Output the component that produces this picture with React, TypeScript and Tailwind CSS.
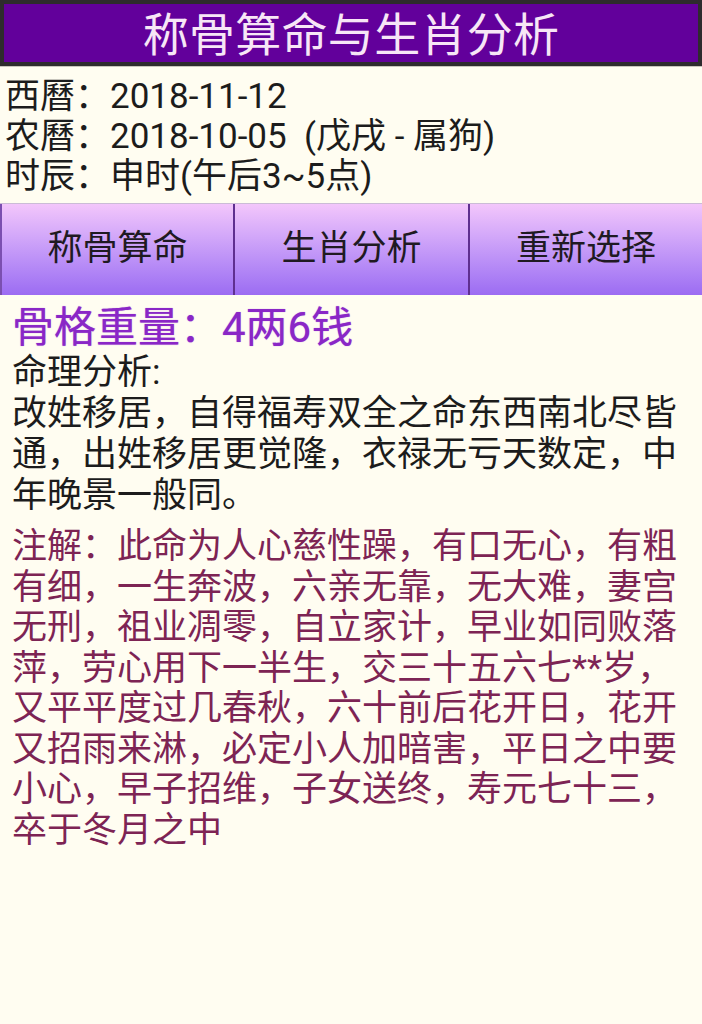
import React from "react";

const FONT = "font-['Roboto','Noto_Sans_CJK_SC',sans-serif]";

export default function App() {
  return (
    <div className={`w-[702px] min-h-[1024px] bg-[#fffdf1] ${FONT} text-[#1c1c1c]`}>
      {/* Title bar */}
      <div className="bg-[#2e2b2e] p-[4px] pb-[4px]">
        <div className="h-[58px] bg-[#62009b] flex items-center justify-center pt-[3px]">
          <span className="text-[46px] leading-none text-[#f7e6f6] tracking-[0.3px]">称骨算命与生肖分析</span>
        </div>
      </div>
      <div className="h-[1px] bg-[#c9c6bc]" />

      {/* Info lines */}
      <div className="pt-[10px] pb-[6px] pl-[5px] text-[35px] leading-[40px]">
        <div>西曆：2018-11-12</div>
        <div>农曆：2018-10-05&nbsp; (戊戌 - 属狗)</div>
        <div>时辰：申时(午后3~5点)</div>
      </div>

      {/* Buttons */}
      <div className="flex h-[92px] border-t border-[#cbbcd6] bg-gradient-to-b from-[#f3c6fb] to-[#9c6cf2]">
        <div className="w-[233px] flex items-center justify-center border-l-2 border-[#7b4fb0] text-[35px] text-[#1f1a22]">称骨算命</div>
        <div className="w-[235px] flex items-center justify-center border-l-2 border-[#5f2f90] text-[35px] text-[#1f1a22]">生肖分析</div>
        <div className="flex-1 flex items-center justify-center border-l-2 border-[#5f2f90] text-[35px] text-[#1f1a22]">重新选择</div>
      </div>

      {/* Result */}
      <div className="px-[12px] pt-[9px]">
        <div className="text-[42px] leading-[48px] text-[#8a27c6] [text-shadow:0_0_1px_#b070e0]">骨格重量：4两6钱</div>
        <div className="text-[35px] leading-[41px]">
          <div>命理分析:</div>
          <div>改姓移居，自得福寿双全之命东西南北尽皆通，出姓移居更觉隆，衣禄无亏天数定，中年晚景一般同。</div>
        </div>
        <div className="mt-[11px] text-[35px] leading-[40.5px] text-[#7d2454]">
          注解：此命为人心慈性躁，有口无心，有粗有细，一生奔波，六亲无靠，无大难，妻宫无刑，祖业凋零，自立家计，早业如同败落萍，劳心用下一半生，交三十五六七**岁，又平平度过几春秋，六十前后花开日，花开又招雨来淋，必定小人加暗害，平日之中要小心，早子招维，子女送终，寿元七十三，卒于冬月之中
        </div>
      </div>
    </div>
  );
}
